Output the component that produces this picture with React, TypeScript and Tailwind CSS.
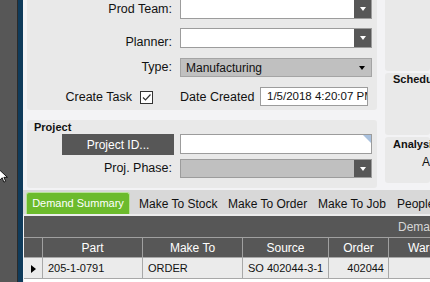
import React from "react";

const font = { fontFamily: '"Liberation Sans", Arial, sans-serif' };

function DropButton() {
  return (
    <div className="flex h-full w-[17px] shrink-0 items-center justify-center bg-[#575757]">
      <div className="h-0 w-0 border-x-[3px] border-t-[4px] border-x-transparent border-t-white" />
    </div>
  );
}

function ComboBox({ gray = false, height = "h-[20px]" }: { gray?: boolean; height?: string }) {
  return (
    <div className={`flex ${height} w-[192px] border border-[#9c9c9c] ${gray ? "bg-[#c0c0c0]" : "bg-white"}`}>
      <div className="flex-1" />
      <DropButton />
    </div>
  );
}

function FieldRow({
  label,
  children,
  className,
  labelClass = "",
}: {
  label: string;
  children: React.ReactNode;
  className: string;
  labelClass?: string;
}) {
  return (
    <div className={`flex items-center ${className}`}>
      <div className={`w-[145px] shrink-0 text-right text-[12.5px] text-[#111] ${labelClass}`}>{label}</div>
      <div className="ml-2">{children}</div>
    </div>
  );
}

const columns = [
  { name: "Part", w: "w-[100px]" },
  { name: "Make To", w: "w-[100px]" },
  { name: "Source", w: "w-[86px]" },
  { name: "Order", w: "w-[60px]" },
  { name: "Warehouse", w: "w-[100px]" },
];

export default function App() {
  return (
    <div className="relative flex h-[282px] w-[430px] overflow-hidden bg-[#f3f3f5]" style={font}>
      <div className="w-[17px] shrink-0 bg-[#575757]" />
      <div className="w-px shrink-0 bg-[#2b2b2b]" />
      <div className="w-[5px] shrink-0 bg-[#0f3b5b]" />

      <div className="flex min-w-0 flex-1 flex-col">
        <div className="flex h-[190px] shrink-0 gap-2 pl-1">
          <div className="flex w-[350px] shrink-0 flex-col">
            <div className="h-[110px] rounded-b-[3px] bg-[#e9e9e9]">
              <FieldRow label="Prod Team:" className="mt-[-1px] h-[20px]">
                <ComboBox />
              </FieldRow>
              <FieldRow label="Planner:" className="mt-[9px] h-[20px]" labelClass="pt-[8px]">
                <ComboBox />
              </FieldRow>
              <FieldRow label="Type:" className="mt-[10px] h-[19px]">
                <div className="flex h-[19px] w-[192px] items-center border border-[#a4a4a4] bg-[#c0c0c0] pl-[5px] text-[12px] text-[#111]">
                  <span className="flex-1">Manufacturing</span>
                  <div className="mr-[6px] h-0 w-0 border-x-[3px] border-t-[4px] border-x-transparent border-t-black" />
                </div>
              </FieldRow>
              <div className="mt-[10px] flex h-[19px] items-center">
                <div className="flex w-[145px] shrink-0 items-center justify-end gap-2 pr-[19px] pt-[2px]">
                  <span className="text-[12.5px] text-[#111]">Create Task</span>
                  <div className="relative h-[13px] w-[13px] border border-[#333] bg-white">
                    <svg viewBox="0 0 13 13" className="absolute -left-px -top-px h-[13px] w-[13px]">
                      <path d="M3 6.5 L5.5 9 L10.5 3.5" fill="none" stroke="#333" strokeWidth="1.2" />
                    </svg>
                  </div>
                </div>
                <span className="ml-2 w-[80px] pt-[2px] text-[12.5px] text-[#111]">Date Created</span>
                <div className="flex h-[19px] w-[108px] items-center overflow-hidden whitespace-nowrap border border-[#9c9c9c] bg-white pl-[6px] text-[11.5px] text-[#111]">
                  1/5/2018 4:20:07 PM
                </div>
              </div>
            </div>

            <div className="mt-[10px] h-[68px] rounded-[3px] bg-[#e9e9e9]">
              <div className="h-[14px] pl-[7px] text-[11px] font-bold leading-[14px] text-[#111]">Project</div>
              <div className="flex items-center">
                <div className="ml-[35px] flex h-[21px] w-[112px] items-center justify-center bg-[#575757] text-[12px] text-white">
                  Project ID...
                </div>
                <div className="relative ml-[6px] h-[20px] w-[192px] self-start border border-[#9c9c9c] bg-white">
                  <div className="absolute right-0 top-0 h-0 w-0 border-l-[8px] border-t-[8px] border-l-transparent border-t-[#a9c1de]" />
                </div>
              </div>
              <FieldRow label="Proj. Phase:" className="mt-[4px] h-[19px]">
                <ComboBox gray height="h-[19px]" />
              </FieldRow>
            </div>
          </div>

          <div className="flex min-w-0 flex-1 flex-col gap-[2px]">
            <div className="h-[71px] rounded-b-[3px] bg-[#e9e9e9]" />
            <div className="h-[62px] rounded-[3px] bg-[#e9e9e9] pl-[8px] text-[11px] font-bold leading-[12px] text-[#111]">
              Scheduling
            </div>
            <div className="h-[46px] rounded-[3px] bg-[#e9e9e9] pl-[8px] text-[11px] leading-[12px] text-[#111]">
              <div className="pt-px font-bold">Analysis</div>
              <div className="mt-[6px] pl-[29px] text-[12px]">Actual</div>
            </div>
          </div>
        </div>

        <div className="flex h-[26px] shrink-0 items-start overflow-hidden whitespace-nowrap border-b-2 border-[#ececec] bg-[#d8d8d8] pl-[3px] pt-[2px] text-[12px]">
          <div className="flex h-[22px] w-[104px] shrink-0 items-center justify-center rounded-t-[3px] border border-b-0 border-[#b9e39a] bg-[#6cbb2c] text-[11px] text-white">
            Demand Summary
          </div>
          <div className="flex h-[22px] shrink-0 items-center pl-[9px] pt-[2px] text-[#111]">
            <span className="w-[89px] shrink-0">Make To Stock</span>
            <span className="w-[90px] shrink-0">Make To Order</span>
            <span className="w-[79px] shrink-0">Make To Job</span>
            <span className="shrink-0">People</span>
          </div>
        </div>

        <div className="ml-px flex min-h-0 flex-1 flex-col whitespace-nowrap bg-white text-[12px]">
          <div className="flex h-[22px] shrink-0 items-center border-b border-[#a0a0a0] bg-[#575757] pl-[374px] text-[#d6d6d6]">
            Demand Summary
          </div>
          <div className="flex h-[20px] shrink-0 border-b border-[#a8a8a8] bg-[#575757] text-white">
            <div className="w-[19px] shrink-0 border-r border-[#a0a0a0]" />
            {columns.map((c) => (
              <div key={c.name} className={`${c.w} flex shrink-0 items-center justify-center border-r border-[#a0a0a0]`}>
                {c.name}
              </div>
            ))}
          </div>
          <div className="flex h-[21px] shrink-0 border-b border-[#a8a8a8] bg-[#ebebeb] text-[11px] text-[#111]">
            <div className="flex w-[19px] shrink-0 items-center justify-center border-r border-[#a8a8a8] pt-[2px]">
              <div className="h-0 w-0 border-y-[4px] border-l-[5px] border-y-transparent border-l-black" />
            </div>
            <div className="flex w-[100px] shrink-0 items-center border-r border-[#a8a8a8] pl-[5px]">205-1-0791</div>
            <div className="flex w-[100px] shrink-0 items-center border-r border-[#a8a8a8] pl-[5px]">ORDER</div>
            <div className="flex w-[86px] shrink-0 items-center border-r border-[#a8a8a8] pl-[5px]">SO 402044-3-1</div>
            <div className="flex w-[60px] shrink-0 items-center justify-end border-r border-[#a8a8a8] pr-[4px]">402044</div>
            <div className="w-[100px] shrink-0" />
          </div>
        </div>
      </div>

      <svg className="absolute left-[-2px] top-[169px]" width="10" height="14" viewBox="0 0 10 16">
        <path d="M1 1 L1 13 L4 10 L6 15 L8 14 L6 9.5 L10 9.5 Z" fill="white" stroke="black" strokeWidth="1" />
      </svg>
    </div>
  );
}
